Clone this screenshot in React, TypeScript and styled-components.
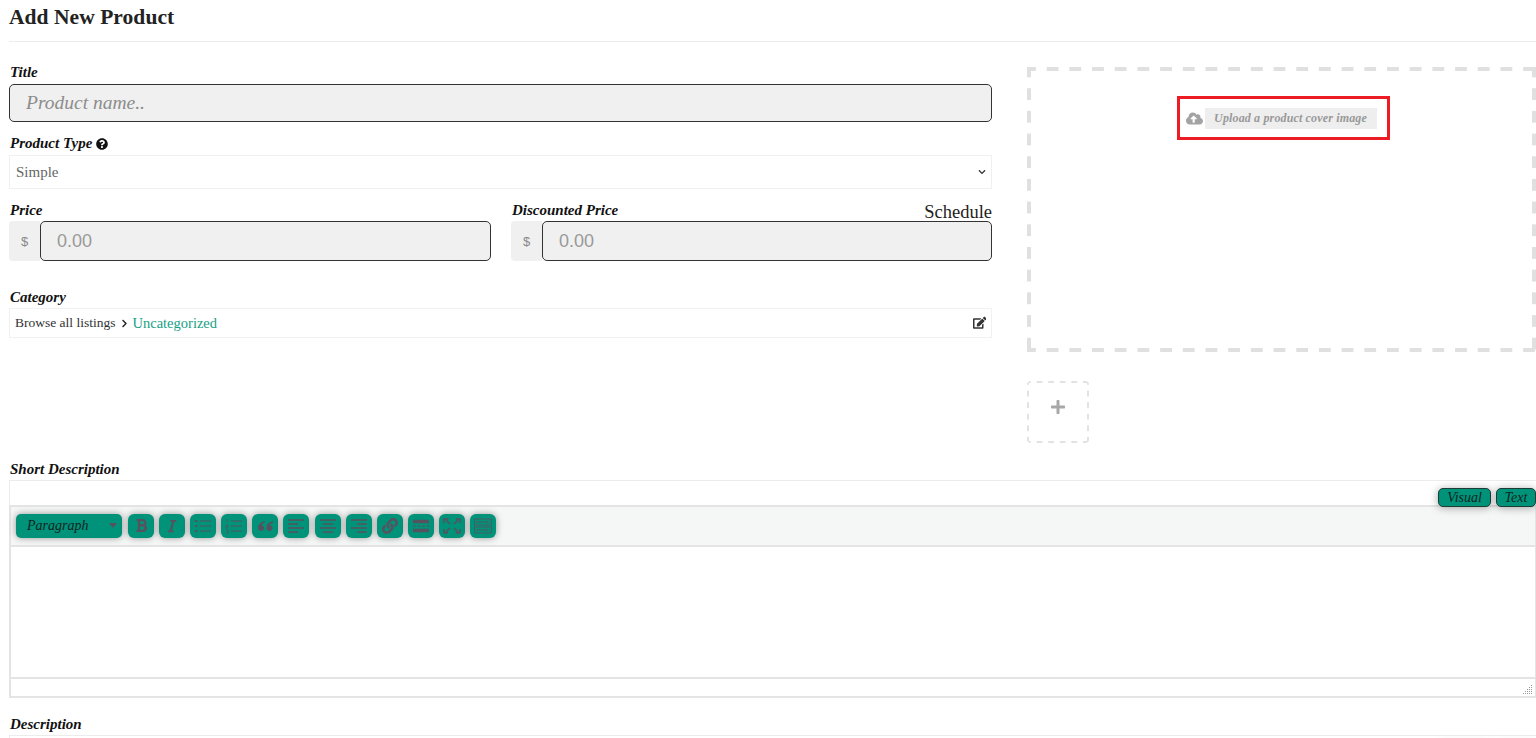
import React from "react";
import styled, { createGlobalStyle, css } from "styled-components";
import { FaBold, FaChevronDown, FaChevronRight, FaCloudUploadAlt, FaEdit, FaItalic, FaLink, FaPlus, FaQuestionCircle } from "react-icons/fa";

const GlobalStyle = createGlobalStyle`
  html, body {
    margin: 0;
    padding: 0;
    background: #fff;
    height: 738px;
    overflow: hidden;
  }
  * { box-sizing: border-box; }
  body {
    font-family: "Liberation Serif", "DejaVu Serif", serif;
    color: #111;
  }
`;

// css dashed borders can't set dash length, so the drop zones paint their own edges
const dashedEdges = (thick: number, dash: number, pitch: number, color: string, offX: number, offY: number) => {
  const h = `linear-gradient(to right, ${color} ${dash}px, transparent ${dash}px)`;
  const v = `linear-gradient(to bottom, ${color} ${dash}px, transparent ${dash}px)`;
  return css`
    background-image: ${h}, ${h}, ${v}, ${v};
    background-size: ${pitch}px ${thick}px, ${pitch}px ${thick}px, ${thick}px ${pitch}px, ${thick}px ${pitch}px;
    background-position: ${offX}px 0, ${offX}px 100%, 0 ${offY}px, 100% ${offY}px;
    background-repeat: repeat-x, repeat-x, repeat-y, repeat-y;
  `;
};

const Page = styled.main`
  height: 738px;
  padding-left: 9px;
  overflow: hidden;
`;

const Header = styled.header`
  height: 42px;
  border-bottom: 1px solid #ececec;
  margin-bottom: 21px;
`;

const Heading = styled.h1`
  margin: 0;
  padding-top: 4px;
  font-size: 21.5px;
  line-height: 27px;
  font-weight: 700;
  letter-spacing: 0.05px;
  color: #222;
`;

const TopGrid = styled.div`
  display: grid;
  grid-template-columns: 983px 509px;
  column-gap: 35px;
  margin-bottom: 17px;
`;

const LeftColumn = styled.div`
  display: flex;
  flex-direction: column;
`;

const Label = styled.label<{ $top?: number }>`
  display: flex;
  align-items: center;
  gap: 4px;
  height: 18px;
  margin-top: ${({ $top }) => $top ?? 0}px;
  padding: 1px 0 0 1px;
  font-size: 15px;
  font-weight: 700;
  font-style: italic;
  color: #111;
  svg { font-size: 12px; }
`;

const TextInput = styled.input`
  display: block;
  width: 100%;
  height: 100%;
  padding: 0 16px;
  border: 1px solid #333;
  border-radius: 5px;
  background: #f0f0f0;
  outline: none;
  font-family: inherit;
  &::placeholder { color: #8c8c8c; opacity: 1; }
`;

const TitleBox = styled.div`
  height: 38px;
  margin-top: 3px;
  input {
    font-size: 19.5px;
    font-style: italic;
  }
`;

const SelectBox = styled.div`
  display: flex;
  align-items: center;
  justify-content: space-between;
  height: 34px;
  margin-top: 3px;
  padding: 0 5px 0 6px;
  border: 1px solid #f0f0f0;
  font-size: 15px;
  color: #666;
  svg { font-size: 8px; color: #333; }
`;

const PriceRow = styled.div`
  display: grid;
  grid-template-columns: 482px 481px;
  column-gap: 20px;
  margin-top: 12px;
`;

const LabelRow = styled.div`
  display: flex;
  align-items: flex-end;
  justify-content: space-between;
  height: 18px;
`;

const ScheduleLink = styled.a`
  font-size: 18.5px;
  line-height: 18px;
  color: #222;
  transform: translateY(2px);
`;

const PriceGroup = styled.div`
  display: flex;
  height: 40px;
  margin-top: 2px;
  input {
    flex: 1;
    font-size: 18px;
    font-family: "Liberation Sans", sans-serif;
    &::placeholder { color: #999; }
  }
`;

const Addon = styled.span`
  display: flex;
  align-items: center;
  justify-content: center;
  width: 31px;
  background: #f0f0f0;
  border-radius: 4px 0 0 4px;
  font-size: 13px;
  font-family: "Liberation Sans", sans-serif;
  color: #888;
`;

const CategoryBox = styled.div`
  display: flex;
  align-items: center;
  justify-content: space-between;
  height: 30px;
  margin-top: 2px;
  padding: 0 5px;
  border: 1px solid #f1f1f1;
  font-size: 13.5px;
  color: #333;
`;

const Crumbs = styled.span`
  display: flex;
  align-items: center;
  gap: 4px;
  svg { font-size: 9px; color: #222; }
`;

const CurrentCrumb = styled.span`
  font-size: 14.5px;
  color: #17a085;
`;

const RightColumn = styled.div`
  display: flex;
  flex-direction: column;
  align-items: flex-start;
  padding-top: 4px;
`;

const CoverDrop = styled.div`
  display: flex;
  justify-content: center;
  align-items: flex-start;
  width: 100%;
  height: 285px;
  padding: 29px 0 0 3px;
  ${dashedEdges(4, 11.5, 22.7, "#e0e0e0", -3, -1.5)}
`;

const UploadHighlight = styled.div`
  display: flex;
  align-items: center;
  gap: 2px;
  width: 213px;
  height: 44px;
  padding: 0 10px 0 6px;
  border: 3px solid #ed1c24;
  svg { font-size: 17px; color: #a3a3a3; flex: none; }
`;

const UploadLabel = styled.span`
  flex: 1;
  height: 21px;
  line-height: 21px;
  text-align: center;
  background: #eeeeee;
  font-size: 12px;
  font-weight: 700;
  font-style: italic;
  letter-spacing: 0.15px;
  color: #999;
`;

const AddImage = styled.div`
  display: flex;
  align-items: center;
  justify-content: center;
  width: 62px;
  height: 62px;
  margin-top: 29px;
  border-radius: 4px;
  padding-bottom: 10px;
  ${dashedEdges(2, 5.5, 11.6, "#e2e2e2", -2, -2)}
  svg { font-size: 16px; color: #a8a8a8; }
`;

const EditorShell = styled.section`
  margin-top: 2px;
  border-top: 1px solid #ececec;
`;

const TabRow = styled.div`
  display: flex;
  justify-content: flex-end;
  gap: 5px;
  height: 24px;
  padding-top: 7px;
  border-left: 1px solid #ececec;
  position: relative;
  z-index: 1;
`;

const ModeTab = styled.button<{ $width: number }>`
  width: ${({ $width }) => $width}px;
  height: 19px;
  padding: 0;
  border: 1px solid #1d3d37;
  border-radius: 5px;
  background: #00937a;
  box-shadow: 0 1px 9px rgba(0, 0, 0, 0.35);
  font-family: inherit;
  font-size: 14px;
  font-style: italic;
  color: #10251f;
`;

const EditorFrame = styled.div`
  border: 2px solid #e4e4e4;
  border-right-width: 1px;
`;

const Toolbar = styled.div`
  display: flex;
  align-items: center;
  height: 40px;
  padding: 0 0 1px 5px;
  background: #f5f7f6;
  border-bottom: 2px solid #e4e4e4;
`;

const FormatSelect = styled.div`
  display: flex;
  align-items: center;
  justify-content: space-between;
  width: 106px;
  height: 24px;
  margin-right: 6px;
  padding: 0 5px 0 11px;
  border-radius: 5px;
  background: #00937a;
  box-shadow: 0 0 7px rgba(0, 0, 0, 0.4);
  font-size: 14px;
  font-style: italic;
  color: #10251f;
`;

const Caret = styled.span`
  width: 0;
  height: 0;
  border-left: 4px solid transparent;
  border-right: 4px solid transparent;
  border-top: 5px solid #55535f;
`;

const ToolButton = styled.button`
  display: flex;
  align-items: center;
  justify-content: center;
  flex: none;
  width: 26px;
  height: 24px;
  margin-right: 5.1px;
  padding: 0;
  border: 0;
  border-radius: 6px;
  background: #00937a;
  box-shadow: 0 0 7px rgba(0, 0, 0, 0.4);
  color: #55535f;
  svg { display: block; }
`;

const EditArea = styled.div`
  height: 130px;
  background: #fff;
`;

const StatusBar = styled.div`
  display: flex;
  justify-content: flex-end;
  align-items: flex-end;
  height: 19px;
  padding: 0 2px 1px 0;
  border-top: 2px solid #e4e4e4;
  background: #fff;
  svg { display: block; }
`;

const Glyph = ({ children }: { children: React.ReactNode }) => (
  <svg width="18" height="16" viewBox="0 0 18 16" fill="none" stroke="currentColor" strokeWidth="1">
    {children}
  </svg>
);

const BulletIcon = () => (
  <Glyph>
    <path d="M6 3h11M6 8h11M6 13h11" />
    <path d="M1 3h2.5M1 8h2.5M1 13h2.5" strokeWidth="2" />
  </Glyph>
);

const NumberIcon = () => (
  <Glyph>
    <path d="M6 3h11M6 8h11M6 13h11" />
    <path d="M2 1v3M1 7h2v1.5H1V10h2M1 12h2v3H1" strokeWidth="0.8" />
  </Glyph>
);

const QuoteIcon = () => (
  <svg width="15" height="12" viewBox="1 2.500 16 11.500" fill="currentColor">
    <path d="M8 3C4 4 1 6.500 1 10c0 2 1.200 3.500 3.200 3.500S7.500 12 7.500 10.300 6.200 7.500 4.700 7.500C5 6.200 6.300 5.200 8 4.800zM17 3c-4 1-7 3.500-7 7 0 2 1.200 3.500 3.200 3.500s3.300-1.500 3.300-3.200-1.300-2.800-2.800-2.800c.3-1.300 1.600-2.300 3.300-2.700z" />
  </svg>
);

const AlignIcon = ({ lines }: { lines: string }) => (
  <Glyph>
    <path d={lines} strokeWidth="1.3" />
  </Glyph>
);

const ReadMoreIcon = () => (
  <Glyph>
    <path d="M1 3.500h16M1 12.500h16" strokeWidth="3.500" />
    <path d="M1 8h3M5.500 8h3M10 8h3M14.500 8h3" strokeWidth="1" />
  </Glyph>
);

const FullscreenIcon = () => (
  <Glyph>
    <path d="M3 2l4 4M15 2l-4 4M3 14l4-4M15 14l-4-4" strokeWidth="1.700" />
    <path d="M1 5V1h4.500M13 1h4v4M17 11v4h-4.500M5 15H1v-4" strokeWidth="1.500" />
  </Glyph>
);

const ToggleIcon = () => (
  <Glyph>
    <rect x="0.500" y="1" width="17" height="6" strokeWidth="0.800" />
    <rect x="0.500" y="9" width="17" height="6" strokeWidth="0.800" />
    <path d="M2.500 4h13M2.500 12h13" strokeWidth="1.300" strokeDasharray="1.500 1" />
  </Glyph>
);

const ResizeHandle = () => {
  const dots: [number, number][] = [];
  for (let col = 0; col < 5; col++) {
    for (let row = 4 - col; row < 5; row++) {
      dots.push([col * 2, row * 2]);
    }
  }
  return (
    <svg width="10" height="10" viewBox="0 0 10 10" fill="#9a9a9a">
      {dots.map(([x, y]) => (
        <rect key={`${x}-${y}`} x={x} y={y} width="1" height="1" />
      ))}
    </svg>
  );
};

const toolButtons = [
  <FaBold size={15} />,
  <FaItalic size={14} />,
  <BulletIcon />,
  <NumberIcon />,
  <QuoteIcon />,
  <AlignIcon lines="M1 2h16M1 6h10M1 10h16M1 14h10" />,
  <AlignIcon lines="M1 2h16M4 6h10M1 10h16M4 14h10" />,
  <AlignIcon lines="M1 2h16M7 6h10M1 10h16M7 14h10" />,
  <FaLink size={16} />,
  <ReadMoreIcon />,
  <FullscreenIcon />,
  <ToggleIcon />,
];

const App = () => (
  <>
    <GlobalStyle />
    <Page>
      <Header>
        <Heading>Add New Product</Heading>
      </Header>

      <TopGrid>
        <LeftColumn>
          <Label>Title</Label>
          <TitleBox>
            <TextInput placeholder="Product name.." />
          </TitleBox>

          <Label $top={12}>
            Product Type <FaQuestionCircle />
          </Label>
          <SelectBox>
            Simple
            <FaChevronDown />
          </SelectBox>

          <PriceRow>
            <div>
              <LabelRow>
                <Label>Price</Label>
              </LabelRow>
              <PriceGroup>
                <Addon>$</Addon>
                <TextInput placeholder="0.00" />
              </PriceGroup>
            </div>
            <div>
              <LabelRow>
                <Label>Discounted Price</Label>
                <ScheduleLink>Schedule</ScheduleLink>
              </LabelRow>
              <PriceGroup>
                <Addon>$</Addon>
                <TextInput placeholder="0.00" />
              </PriceGroup>
            </div>
          </PriceRow>

          <Label $top={27}>Category</Label>
          <CategoryBox>
            <Crumbs>
              Browse all listings
              <FaChevronRight />
              <CurrentCrumb>Uncategorized</CurrentCrumb>
            </Crumbs>
            <FaEdit />
          </CategoryBox>
        </LeftColumn>

        <RightColumn>
          <CoverDrop>
            <UploadHighlight>
              <FaCloudUploadAlt />
              <UploadLabel>Upload a product cover image</UploadLabel>
            </UploadHighlight>
          </CoverDrop>
          <AddImage>
            <FaPlus />
          </AddImage>
        </RightColumn>
      </TopGrid>

      <Label>Short Description</Label>
      <EditorShell>
        <TabRow>
          <ModeTab $width={53}>Visual</ModeTab>
          <ModeTab $width={40}>Text</ModeTab>
        </TabRow>
        <EditorFrame>
          <Toolbar>
            <FormatSelect>
              Paragraph
              <Caret />
            </FormatSelect>
            {toolButtons.map((icon, i) => (
              <ToolButton key={i}>{icon}</ToolButton>
            ))}
          </Toolbar>
          <EditArea />
          <StatusBar>
            <ResizeHandle />
          </StatusBar>
        </EditorFrame>
      </EditorShell>

      <Label $top={17}>Description</Label>
      <EditorShell>
        <TabRow>
          <ModeTab $width={53} />
          <ModeTab $width={40} />
        </TabRow>
      </EditorShell>
    </Page>
  </>
);

export default App;
